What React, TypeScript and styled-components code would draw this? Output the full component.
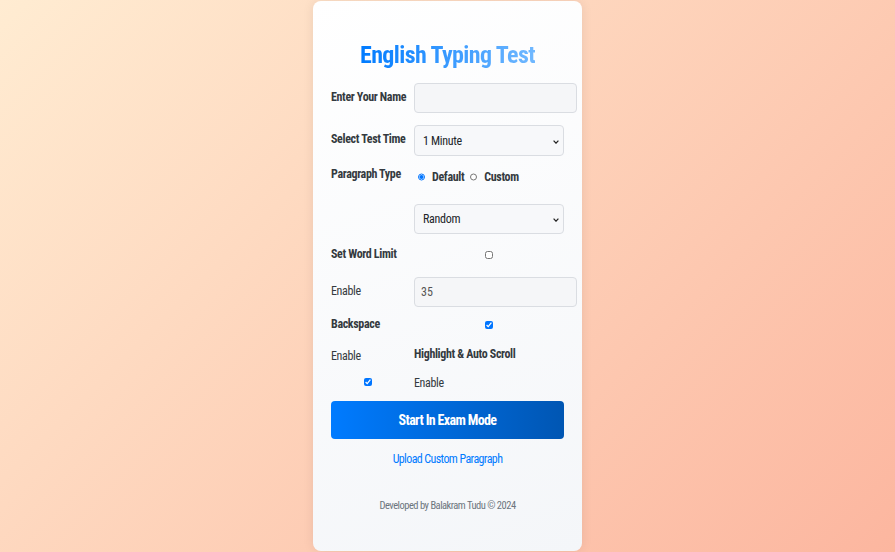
import React from "react";
import styled, { createGlobalStyle } from "styled-components";

const FONT = `Roboto, "Liberation Sans", Arial, sans-serif`;

const GlobalStyle = createGlobalStyle`
  html, body {
    margin: 0;
    padding: 0;
  }
  body {
    font-family: ${FONT};
    font-stretch: condensed;
    background: linear-gradient(135deg, #ffecd2 0%, #fcb69f 100%);
    min-height: 100vh;
  }
  * { box-sizing: border-box; }
`;

const Page = styled.div`
  min-height: 100vh;
  display: flex;
  align-items: center;
  justify-content: center;
`;

const Card = styled.div`
  width: 269px;
  height: 550px;
  padding: 40px 18px 0;
  border-radius: 8px;
  background: linear-gradient(160deg, #ffffff 0%, #f4f6f9 100%);
  box-shadow: 0 0 12px rgba(0, 0, 0, 0.08);
  display: flex;
  flex-direction: column;
`;

const Title = styled.h2`
  margin: 0;
  font-family: ${FONT};
  font-stretch: condensed;
  font-size: 24px;
  line-height: 28px;
  font-weight: 700;
  letter-spacing: -0.6px;
  text-align: center;
  background: linear-gradient(90deg, #007bff 0%, #70b8ff 100%);
  -webkit-background-clip: text;
  background-clip: text;
  color: transparent;
  align-self: center;
`;

const Row = styled.div<{ $top: number; $h: number }>`
  display: grid;
  grid-template-columns: 73px 150px;
  column-gap: 10px;
  height: ${(p) => p.$h}px;
  margin-top: ${(p) => p.$top}px;
  align-items: start;
`;

const Label = styled.label<{ $pt?: number; $bold?: boolean }>`
  font-family: ${FONT};
  font-stretch: condensed;
  font-size: 12px;
  line-height: 15px;
  font-weight: ${(p) => (p.$bold === false ? 400 : 700)};
  color: #343a40;
  letter-spacing: -0.35px;
  white-space: nowrap;
  padding-top: ${(p) => p.$pt ?? 0}px;
`;

const TextInput = styled.input`
  width: 163px;
  height: 30px;
  padding: 0 6px;
  border: 1px solid #dadde2;
  border-radius: 4px;
  background: #f5f6f8;
  font-family: ${FONT};
  font-stretch: condensed;
  font-size: 12px;
  color: #555;
  outline: none;
`;

const SelectWrap = styled.div<{ $h: number }>`
  position: relative;
  width: 150px;
  height: ${(p) => p.$h}px;
`;

const Select = styled.select`
  appearance: none;
  -webkit-appearance: none;
  width: 100%;
  height: 100%;
  padding: 0 18px 0 8px;
  border: 1px solid #dadde2;
  border-radius: 4px;
  background: #f7f8fa;
  font-family: ${FONT};
  font-stretch: condensed;
  font-size: 12px;
  letter-spacing: -0.3px;
  color: #212529;
  outline: none;
`;

const Chevron = styled.svg`
  position: absolute;
  right: 5px;
  top: 50%;
  width: 6px;
  height: 4px;
  margin-top: -1px;
  pointer-events: none;
`;

const RadioGroup = styled.div`
  display: flex;
  align-items: center;
  padding-top: 3px;
  height: 18px;
`;

const Radio = styled.input.attrs({ type: "radio" })`
  width: 7px;
  height: 8px;
  margin: 0 7px 0 4px;
`;

const RadioText = styled.span`
  font-family: ${FONT};
  font-stretch: condensed;
  font-size: 12px;
  font-weight: 700;
  color: #343a40;
  letter-spacing: -0.35px;
  margin-right: 2px;
`;

const Check = styled.input.attrs({ type: "checkbox" })<{ $dy?: number }>`
  width: 8px;
  height: 10px;
  margin: ${(p) => p.$dy ?? 3}px 0 0;
  justify-self: center;
`;

const StartButton = styled.button`
  margin-top: 11px;
  width: 100%;
  height: 38px;
  flex-shrink: 0;
  border: none;
  border-radius: 4px;
  background: linear-gradient(90deg, #007bff 0%, #0056b3 100%);
  color: #fff;
  font-family: ${FONT};
  font-stretch: condensed;
  font-size: 14px;
  font-weight: 700;
  letter-spacing: -0.65px;
  padding-top: 1px;
  cursor: pointer;
`;

const UploadLink = styled.a`
  margin-top: 13px;
  text-align: center;
  font-family: ${FONT};
  font-stretch: condensed;
  font-size: 12px;
  line-height: 15px;
  color: #007bff;
  letter-spacing: -0.6px;
  text-decoration: none;
`;

const Footer = styled.p`
  margin: 32px 0 0;
  text-align: center;
  font-family: ${FONT};
  font-stretch: condensed;
  font-size: 10.5px;
  line-height: 13px;
  color: #6c757d;
  letter-spacing: -0.5px;
`;

const Empty = styled.span``;

function DropSelect({
  h,
  value,
  options,
}: {
  h: number;
  value: string;
  options: string[];
}) {
  return (
    <SelectWrap $h={h}>
      <Select defaultValue={value}>
        {options.map((o) => (
          <option key={o} value={o}>
            {o}
          </option>
        ))}
      </Select>
      <Chevron viewBox="0 0 6 4" aria-hidden="true">
        <path d="M0.6 0.6 L3 3.2 L5.4 0.6" fill="none" stroke="#222" strokeWidth="1.2" />
      </Chevron>
    </SelectWrap>
  );
}

export default function App() {
  return (
    <>
      <GlobalStyle />
      <Page>
        <Card>
          <Title>English Typing Test</Title>

          <Row $top={14} $h={30}>
            <Label $pt={7}>Enter Your Name</Label>
            <TextInput type="text" />
          </Row>

          <Row $top={12} $h={31}>
            <Label $pt={7}>Select Test Time</Label>
            <DropSelect h={31} value="1 Minute" options={["1 Minute", "2 Minutes", "5 Minutes"]} />
          </Row>

          <Row $top={10} $h={18}>
            <Label $pt={1}>Paragraph Type</Label>
            <RadioGroup>
              <Radio name="ptype" defaultChecked />
              <RadioText>Default</RadioText>
              <Radio name="ptype" />
              <RadioText>Custom</RadioText>
            </RadioGroup>
          </Row>

          <Row $top={20} $h={30}>
            <Empty />
            <DropSelect h={30} value="Random" options={["Random"]} />
          </Row>

          <Row $top={11} $h={15}>
            <Label $pt={2}>Set Word Limit</Label>
            <Check $dy={5} />
          </Row>

          <Row $top={17} $h={30}>
            <Label $pt={7} $bold={false}>Enable</Label>
            <TextInput type="text" defaultValue="35" />
          </Row>

          <Row $top={10} $h={15}>
            <Label>Backspace</Label>
            <Check $dy={3} defaultChecked />
          </Row>

          <Row $top={13} $h={15}>
            <Label $pt={4} $bold={false}>Enable</Label>
            <Label $pt={2}>Highlight &amp; Auto Scroll</Label>
          </Row>

          <Row $top={15} $h={15}>
            <Check $dy={2} defaultChecked />
            <Label $pt={1} $bold={false}>Enable</Label>
          </Row>

          <StartButton>Start In Exam Mode</StartButton>
          <UploadLink href="#">Upload Custom Paragraph</UploadLink>
          <Footer>Developed by Balakram Tudu © 2024</Footer>
        </Card>
      </Page>
    </>
  );
}
